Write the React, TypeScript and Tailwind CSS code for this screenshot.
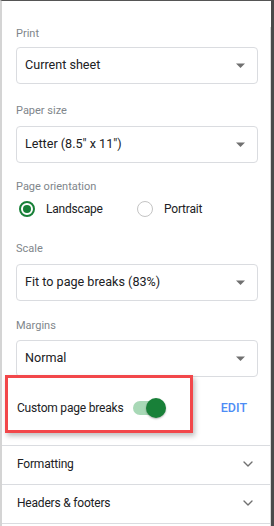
import { ChevronDown } from "lucide-react";

const FONT = "font-['Roboto','Liberation_Sans',sans-serif]";
const BODY = "text-[12px] tracking-[-0.2px] text-[#202124]";

function Caret() {
  return (
    <svg width="9" height="5" viewBox="0 0 9 5" className="shrink-0">
      <path d="M0 0.5h9L4.5 5z" fill="#707070" />
    </svg>
  );
}

function Select({ value }: { value: string }) {
  return (
    <div className="flex h-[37px] items-center justify-between rounded-[4px] border border-[#dadce0] pl-[8px] pr-[12px]">
      <span className="text-[12.6px] text-[#202124]">{value}</span>
      <Caret />
    </div>
  );
}

function Label({ text, className }: { text: string; className: string }) {
  return (
    <div className={`text-[11px] leading-[14px] text-[#80868b] ${className}`}>
      {text}
    </div>
  );
}

function Radio({ checked, label }: { checked: boolean; label: string }) {
  return (
    <div className="flex items-center">
      <span
        className={`flex size-[16px] items-center justify-center rounded-full ${
          checked ? "border-2 border-[#188038]" : "border-[1.5px] border-[#c4c4c4]"
        }`}
      >
        {checked && <span className="size-[8px] rounded-full bg-[#188038]" />}
      </span>
      <span className={`ml-[11px] ${BODY}`}>{label}</span>
    </div>
  );
}

function Section({ title }: { title: string }) {
  return (
    <div className="flex h-[39px] items-center justify-between border-b border-[#dadce0] pb-[2px] pl-[15px] pr-[14px]">
      <span className={BODY}>{title}</span>
      <ChevronDown size={16} strokeWidth={2} color="#707070" />
    </div>
  );
}

export default function App() {
  return (
    <div
      className={`relative h-[526px] w-[274px] overflow-hidden border-t border-l-2 border-r-[3px] border-t-[#555] border-l-[#d4d4d4] border-r-[#4a4a4a] bg-white ${FONT}`}
    >
      <div className="h-full border-r border-[#d8d8d8]">
        <div className="pl-[14px] pr-[12px]">
          <Label text="Print" className="mt-[26px]" />
          <div className="mt-[6px]">
            <Select value="Current sheet" />
          </div>
          <Label text="Paper size" className="mt-[20px]" />
          <div className="mt-[8px]">
            <Select value={'Letter (8.5" x 11")'} />
          </div>
          <Label text="Page orientation" className="mt-[17px]" />
          <div className="mt-[5px] flex h-[20px] items-center pl-[3px]">
            <div className="w-[118px]">
              <Radio checked label="Landscape" />
            </div>
            <Radio checked={false} label="Portrait" />
          </div>
          <Label text="Scale" className="mt-[23px]" />
          <div className="mt-[8px]">
            <Select value="Fit to page breaks (83%)" />
          </div>
          <Label text="Margins" className="mt-[18px]" />
          <div className="mt-[7px]">
            <Select value="Normal" />
          </div>
          <div className="flex h-[68px] items-center pb-[6px] pl-[1px]">
            <span className={BODY}>Custom page breaks</span>
            <span className="relative ml-[10px] h-[14px] w-[30px] rounded-full bg-[#a8d8b6]">
              <span className="absolute -right-[3px] -top-[3px] size-[20px] rounded-full bg-[#188038] shadow-[0_1px_2px_rgba(0,0,0,0.3)]" />
            </span>
            <span className="ml-auto mr-[11px] text-[12.5px] font-medium text-[#4d8cf5]">EDIT</span>
          </div>
        </div>
        <div className="border-t border-[#dadce0]">
          <Section title="Formatting" />
          <Section title="Headers & footers" />
        </div>
      </div>
      <div className="pointer-events-none absolute left-[3px] top-[374px] h-[58px] w-[188px] border-[3px] border-[#f2474a] shadow-[2px_3px_5px_rgba(0,0,0,0.25)]" />
    </div>
  );
}
